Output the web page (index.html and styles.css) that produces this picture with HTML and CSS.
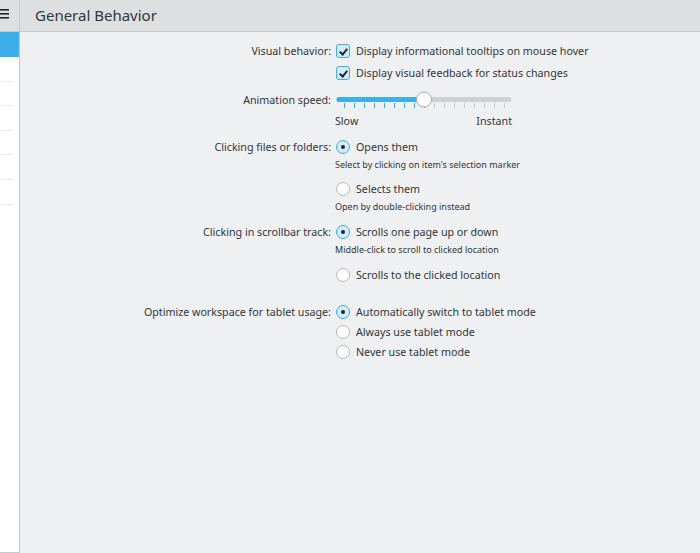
FILE: index.html
```html
<!DOCTYPE html>
<html>
<head>
    <title>General Behavior</title>
    <link rel="stylesheet" href="styles.css">
</head>
<body>

<div class="window">
    <aside class="sidebar">
        <div class="sidebar-header">
            <svg class="menu-icon" width="9" height="10" viewBox="0 0 9 10">
                <rect x="0" y="0" width="9" height="1.6" fill="#232629"/>
                <rect x="0" y="4" width="9" height="1.6" fill="#232629"/>
                <rect x="0" y="8" width="9" height="1.6" fill="#232629"/>
            </svg>
        </div>
        <div class="side-item selected"></div>
        <div class="side-item"></div>
        <div class="side-item"></div>
        <div class="side-item"></div>
        <div class="side-item"></div>
        <div class="side-item"></div>
        <div class="side-item"></div>
    </aside>

    <main class="main">
        <header class="page-header">
            <h1>General Behavior</h1>
        </header>

        <div class="form">
            <!-- visual behavior -->
            <div class="label">Visual behavior:</div>
            <div class="controls">
                <div class="option"><span class="check on"></span>Display informational tooltips on mouse hover</div>
                <div class="option gap2"><span class="check on"></span>Display visual feedback for status changes</div>
            </div>

            <!-- animation speed -->
            <div class="label">Animation speed:</div>
            <div class="controls">
                <svg class="slider" width="176" height="20" viewBox="0 0 176 20">
                    <rect x="0.5" y="7" width="175" height="5" rx="2.5" fill="#cfd0d1"/>
                    <rect x="0.5" y="7" width="88" height="5" rx="2.5" fill="#3daee9"/>
                    <g id="ticks"></g>
                    <circle cx="88" cy="9.5" r="7.5" fill="#fcfcfc" stroke="#a9abad" stroke-width="1"/>
                </svg>
                <div class="slider-labels"><span>Slow</span><span>Instant</span></div>
            </div>

            <!-- clicking files -->
            <div class="label">Clicking files or folders:</div>
            <div class="controls">
                <div class="option"><span class="radio on"></span>Opens them</div>
                <div class="hint">Select by clicking on item's selection marker</div>
                <div class="option after-hint"><span class="radio"></span>Selects them</div>
                <div class="hint">Open by double-clicking instead</div>
            </div>

            <!-- scrollbar -->
            <div class="label">Clicking in scrollbar track:</div>
            <div class="controls">
                <div class="option"><span class="radio on"></span>Scrolls one page up or down</div>
                <div class="hint">Middle-click to scroll to clicked location</div>
                <div class="option after-hint2"><span class="radio"></span>Scrolls to the clicked location</div>
            </div>

            <!-- tablet -->
            <div class="label spaced">Optimize workspace for tablet usage:</div>
            <div class="controls spaced">
                <div class="option"><span class="radio on"></span>Automatically switch to tablet mode</div>
                <div class="option"><span class="radio"></span>Always use tablet mode</div>
                <div class="option"><span class="radio"></span>Never use tablet mode</div>
            </div>
        </div>
    </main>
</div>

<script>
    // slider ticks, 17 steps, first 9 are filled
    var ticks = document.getElementById("ticks");
    for (var i = 0; i < 17; i++) {
        var line = document.createElementNS("http://www.w3.org/2000/svg", "rect");
        line.setAttribute("x", 8 + i * 10);
        line.setAttribute("y", 13);
        line.setAttribute("width", 1);
        line.setAttribute("height", 5);
        line.setAttribute("fill", i <= 8 ? "#3daee9" : "#c3c5c7");
        ticks.appendChild(line);
    }
</script>

</body>
</html>
```

FILE: styles.css
```css
* {
    box-sizing: border-box;
    margin: 0;
    padding: 0;
}
body {
    font-family: 'Noto Sans', sans-serif;
    font-size: 10.7px;
    color: #31363b;
    background-color: #eff0f1;
    width: 700px;
    height: 553px;
    overflow: hidden;
}
.window {
    display: flex;
    height: 553px;
}
.sidebar {
    width: 20px;
    flex-shrink: 0;
    background-color: #ffffff;
    border-right: 1px solid #c9cacc;
    border-bottom: 1px solid #c9cacc;
}
.sidebar-header {
    height: 32px;
    background-color: #dedfe1;
    border-bottom: 1px solid #c4c5c7;
    padding-top: 9px;
}
.menu-icon {
    display: block;
}
.side-item {
    height: 24.6px;
    margin-right: 6px;
    border-bottom: 1px solid #ececec;
}
.side-item.selected {
    height: 25px;
    margin-right: 0;
    background-color: #3daee9;
    border-bottom: none;
}
.main {
    flex: 1;
}
.page-header {
    height: 32px;
    background-color: #dedfe1;
    border-bottom: 1px solid #c4c5c7;
    padding-left: 15px;
}
.page-header h1 {
    font-size: 15px;
    font-weight: normal;
    line-height: 31px;
    color: #31363b;
}
.form {
    display: grid;
    grid-template-columns: 311px 1fr;
    column-gap: 5px;
    row-gap: 7px;
    padding-top: 9px;
}
.label {
    text-align: right;
    line-height: 20px;
}
.option {
    display: flex;
    align-items: center;
    height: 20px;
    white-space: nowrap;
}
.option.gap2 {
    margin-top: 2px;
}
.option.after-hint {
    margin-top: 6px;
}
.option.after-hint2 {
    margin-top: 7px;
}
.spaced {
    margin-top: 10px;
}
.hint {
    font-size: 9px;
    line-height: 16px;
    margin-left: -1px;
}
.check {
    width: 14px;
    height: 14px;
    margin-right: 6px;
    border: 1px solid #b7b9bb;
    border-radius: 3px;
    background-color: #fcfcfc;
    position: relative;
}
.check.on {
    border-color: #3daee9;
    background-color: #d3eaf7;
}
.check.on::after {
    content: "";
    position: absolute;
    left: 3.5px;
    top: 1.5px;
    width: 3px;
    height: 6px;
    border-right: 2px solid #232629;
    border-bottom: 2px solid #232629;
    transform: rotate(40deg);
}
.radio {
    width: 14px;
    height: 14px;
    margin-right: 6px;
    border: 1px solid #b7b9bb;
    border-radius: 50%;
    background-color: #fcfcfc;
    position: relative;
}
.radio.on {
    border-color: #3daee9;
    background-color: #d3eaf7;
}
.radio.on::after {
    content: "";
    position: absolute;
    left: 4px;
    top: 4px;
    width: 4px;
    height: 4px;
    border-radius: 50%;
    background-color: #232629;
}
.slider {
    display: block;
}
.slider-labels {
    display: flex;
    justify-content: space-between;
    width: 177px;
    margin-top: 2px;
    margin-left: -1px;
    line-height: 18px;
}
```
